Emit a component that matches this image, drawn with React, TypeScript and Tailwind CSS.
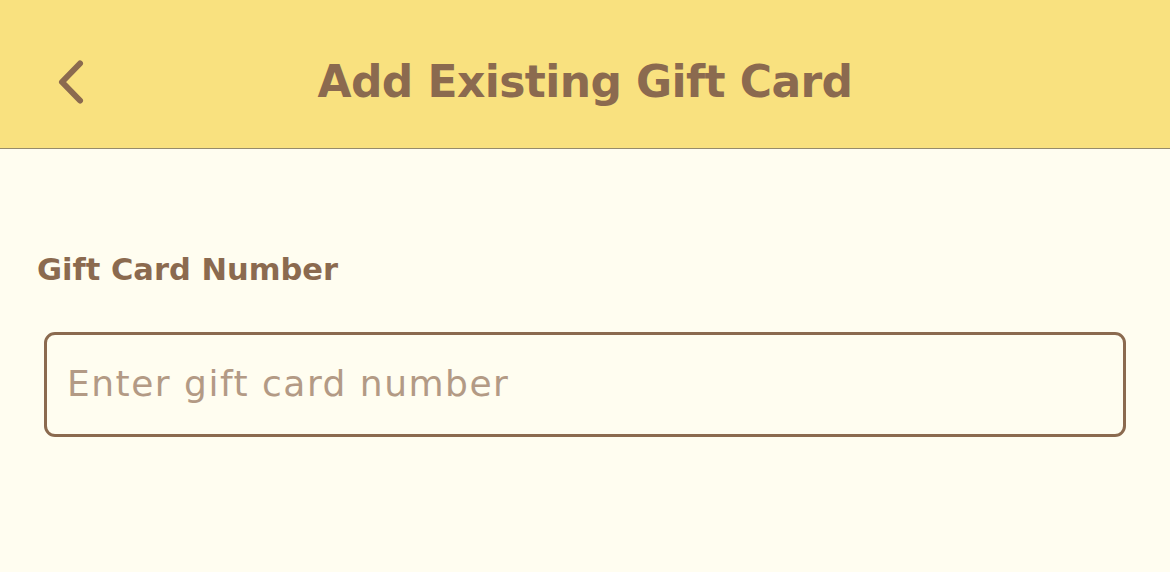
import React from "react";

export default function App() {
  return (
    <div
      className="w-[1170px] h-[572px] bg-[#fffdf0] overflow-hidden"
      style={{ fontFamily: '"DejaVu Sans", sans-serif' }}
    >
      <header className="relative h-[149px] bg-[#f9e17f] border-b border-[#968b6c] flex items-center justify-center">
        <button className="absolute left-[52px] top-[55px] w-[40px] h-[54px] flex items-center justify-center">
          <svg width="40" height="54" viewBox="0 0 40 54" fill="none">
            <path
              d="M28 8.5 L10 27 L28 45.5"
              stroke="#8b6a4f"
              strokeWidth="6"
              strokeLinecap="round"
              strokeLinejoin="round"
            />
          </svg>
        </button>
        <h1 className="text-[44px] font-bold text-[#8b6a4f] tracking-[-0.6px] leading-none mt-[16px]">
          Add Existing Gift Card
        </h1>
      </header>
      <main className="px-[37px] pt-[106px]">
        <label className="block text-[30.5px] font-bold text-[#8b6a4f] leading-none">
          Gift Card Number
        </label>
        <div className="mt-[46px] ml-[7px] w-[1082px] h-[105px] border-[3px] border-[#8b6a4f] rounded-[11px] flex items-center px-[20px]">
          <input
            className="w-full bg-transparent outline-none text-[36px] tracking-[1.5px] text-[#8b6a4f] placeholder:text-[#b39a85]"
            placeholder="Enter gift card number"
            style={{ fontFamily: '"DejaVu Sans", sans-serif' }}
          />
        </div>
      </main>
    </div>
  );
}
